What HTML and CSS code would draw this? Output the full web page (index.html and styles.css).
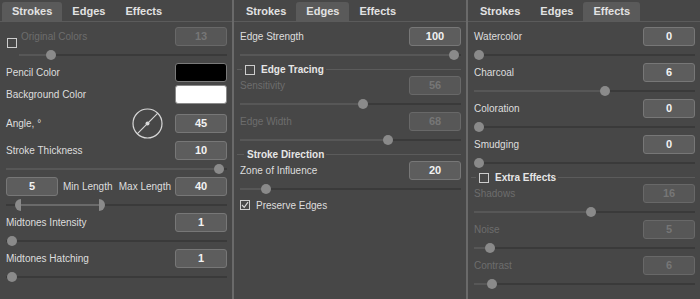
FILE: index.html
```html
<!DOCTYPE html>
<html lang="en">

<head>
  <meta charset="UTF-8">
  <meta name="viewport" content="width=device-width, initial-scale=1.0">
  <title>Sketch settings</title>
  <link rel="stylesheet" href="styles.css">
</head>

<body>
  <div class="dock">

    <!-- Strokes -->
    <section class="panel">
      <div class="tabs">
        <span class="tab active">Strokes</span>
        <span class="tab">Edges</span>
        <span class="tab">Effects</span>
      </div>
      <div class="body">
        <div class="row">
          <span class="check low"></span>
          <span class="label off">Original Colors</span>
          <span class="value off">13</span>
        </div>
        <div class="slider indent">
          <div class="track"><span class="fill" style="width:15.4%"></span><span class="thumb" style="left:15.4%"></span></div>
        </div>
        <div class="row">
          <span class="label">Pencil Color</span>
          <span class="value swatch black"></span>
        </div>
        <div class="row gap3">
          <span class="label">Background Color</span>
          <span class="value swatch white"></span>
        </div>
        <div class="row angle">
          <span class="label">Angle, °</span>
          <svg class="dial" width="31" height="31" viewBox="0 0 31 31">
            <circle cx="15.5" cy="15.5" r="14.5" fill="none" stroke="#d8d8d8" stroke-width="1.2" />
            <line x1="5.2" y1="25.8" x2="25.8" y2="5.2" stroke="#d8d8d8" stroke-width="1.1" />
            <circle cx="15.5" cy="15.5" r="2" fill="#d8d8d8" />
          </svg>
          <span class="value">45</span>
        </div>
        <div class="row gap1">
          <span class="label">Stroke Thickness</span>
          <span class="value">10</span>
        </div>
        <div class="slider">
          <div class="track"><span class="fill" style="width:96.4%"></span><span class="thumb" style="left:96.4%"></span></div>
        </div>
        <div class="row">
          <span class="value">5</span>
          <span class="min">Min Length</span>
          <span class="label"></span>
          <span class="max">Max Length</span>
          <span class="value">40</span>
        </div>
        <div class="slider">
          <div class="track">
            <span class="range" style="left:6.8%;width:35.2%"></span>
            <span class="half left" style="left:6.8%"></span>
            <span class="half right" style="left:42%"></span>
          </div>
        </div>
        <div class="row">
          <span class="label">Midtones Intensity</span>
          <span class="value">1</span>
        </div>
        <div class="slider">
          <div class="track"><span class="thumb" style="left:2.7%"></span></div>
        </div>
        <div class="row">
          <span class="label">Midtones Hatching</span>
          <span class="value">1</span>
        </div>
        <div class="slider">
          <div class="track"><span class="thumb" style="left:2.7%"></span></div>
        </div>
      </div>
    </section>

    <!-- Edges -->
    <section class="panel">
      <div class="tabs">
        <span class="tab">Strokes</span>
        <span class="tab active">Edges</span>
        <span class="tab">Effects</span>
      </div>
      <div class="body">
        <div class="row">
          <span class="label">Edge Strength</span>
          <span class="value">100</span>
        </div>
        <div class="slider">
          <div class="track"><span class="fill" style="width:96.8%"></span><span class="thumb" style="left:96.8%"></span></div>
        </div>
        <div class="group">
          <span class="title"><span class="check"></span>Edge Tracing</span>
        </div>
        <div class="row">
          <span class="label off">Sensitivity</span>
          <span class="value off">56</span>
        </div>
        <div class="slider">
          <div class="track"><span class="fill" style="width:55.7%"></span><span class="thumb" style="left:55.7%"></span></div>
        </div>
        <div class="row">
          <span class="label off">Edge Width</span>
          <span class="value off">68</span>
        </div>
        <div class="slider">
          <div class="track"><span class="fill" style="width:67%"></span><span class="thumb" style="left:67%"></span></div>
        </div>
        <div class="group">
          <span class="title plain">Stroke Direction</span>
        </div>
        <div class="row">
          <span class="label">Zone of Influence</span>
          <span class="value">20</span>
        </div>
        <div class="slider">
          <div class="track"><span class="fill" style="width:11.8%"></span><span class="thumb" style="left:11.8%"></span></div>
        </div>
        <div class="row option">
          <span class="check on">
            <svg width="8" height="8" viewBox="0 0 8 8"><polyline points="1,4 3.2,6.3 7,1.2" fill="none" stroke="#d8d8d8" stroke-width="1.1" /></svg>
          </span>
          <span class="label">Preserve Edges</span>
        </div>
      </div>
    </section>

    <!-- Effects -->
    <section class="panel">
      <div class="tabs">
        <span class="tab">Strokes</span>
        <span class="tab">Edges</span>
        <span class="tab active">Effects</span>
      </div>
      <div class="body">
        <div class="row">
          <span class="label">Watercolor</span>
          <span class="value">0</span>
        </div>
        <div class="slider">
          <div class="track"><span class="thumb" style="left:2.3%"></span></div>
        </div>
        <div class="row">
          <span class="label">Charcoal</span>
          <span class="value">6</span>
        </div>
        <div class="slider">
          <div class="track"><span class="fill" style="width:59.3%"></span><span class="thumb" style="left:59.3%"></span></div>
        </div>
        <div class="row">
          <span class="label">Coloration</span>
          <span class="value">0</span>
        </div>
        <div class="slider">
          <div class="track"><span class="thumb" style="left:2.3%"></span></div>
        </div>
        <div class="row">
          <span class="label">Smudging</span>
          <span class="value">0</span>
        </div>
        <div class="slider">
          <div class="track"><span class="thumb" style="left:2.3%"></span></div>
        </div>
        <div class="group">
          <span class="title"><span class="check"></span>Extra Effects</span>
        </div>
        <div class="row">
          <span class="label off">Shadows</span>
          <span class="value off">16</span>
        </div>
        <div class="slider">
          <div class="track"><span class="fill" style="width:53%"></span><span class="thumb" style="left:53%"></span></div>
        </div>
        <div class="row">
          <span class="label off">Noise</span>
          <span class="value off">5</span>
        </div>
        <div class="slider">
          <div class="track"><span class="fill" style="width:7.2%"></span><span class="thumb" style="left:7.2%"></span></div>
        </div>
        <div class="row">
          <span class="label off">Contrast</span>
          <span class="value off">6</span>
        </div>
        <div class="slider">
          <div class="track"><span class="fill" style="width:8.1%"></span><span class="thumb" style="left:8.1%"></span></div>
        </div>
      </div>
    </section>

  </div>
</body>

</html>
```

FILE: styles.css
```css
body {
  margin: 0;
  background: #474747;
  font-family: "Liberation Sans", Arial, sans-serif;
  font-size: 10px;
  color: #dedede;
}

.dock {
  display: flex;
  gap: 2px;
  height: 299px;
  background: #6a6a6a;
}

.panel {
  flex: 1;
  background: #474747;
}

.tabs {
  display: flex;
  align-items: flex-end;
  height: 21px;
  padding-left: 2px;
  border-bottom: 1px solid #5b5b5b;
}

.tab {
  height: 19px;
  padding: 0 10px;
  line-height: 19px;
  font-size: 11px;
  font-weight: bold;
  color: #e2e2e2;
  border-radius: 3px 3px 0 0;
}

.tab.active {
  background: #5a5a5a;
}

.body {
  display: flex;
  flex-direction: column;
  padding: 5px 5px 0 6px;
}

.row {
  display: flex;
  align-items: center;
  height: 19px;
}

.row.gap3 {
  margin-top: 3px;
}

.row.gap1 {
  margin-top: 1px;
}

.row.angle {
  height: 34px;
  margin-top: 2px;
}

.label {
  flex: 1;
}

.off {
  color: #6d6d6d;
}

.value {
  width: 52px;
  height: 19px;
  box-sizing: border-box;
  border: 1px solid #777;
  border-radius: 3px;
  background: #5d5d5d;
  text-align: center;
  line-height: 17px;
  font-size: 11px;
  font-weight: bold;
  color: #f2f2f2;
}

.value.off {
  border-color: #686868;
  background: #575757;
  color: #767676;
}

.swatch.black {
  background: #000;
  border-color: #7a7a7a;
}

.swatch.white {
  background: #fff;
  border-color: #8a8a8a;
}

.dial {
  margin-right: 12px;
}

.min {
  margin-left: 5px;
}

.max {
  margin-right: 4px;
}

.check {
  display: flex;
  align-items: center;
  justify-content: center;
  width: 10px;
  height: 10px;
  box-sizing: border-box;
  border: 1px solid #cdcdcd;
}

.check.low {
  align-self: flex-end;
  margin: 0 4px -2px 1px;
}

.option {
  height: 14px;
  margin-top: 1px;
}

.option .check {
  margin-right: 6px;
}

.slider {
  display: flex;
  align-items: center;
  height: 17px;
}

.slider.indent {
  padding-left: 13px;
}

.track {
  position: relative;
  flex: 1;
  height: 2px;
  background: #3a3a3a;
}

.fill {
  display: block;
  height: 100%;
  background: #575757;
}

.thumb {
  position: absolute;
  top: 50%;
  width: 10px;
  height: 10px;
  border-radius: 50%;
  background: #8a8a8a;
  transform: translate(-50%, -50%);
}

.range {
  position: absolute;
  top: 0;
  height: 100%;
  background: #6a6a6a;
}

.half {
  position: absolute;
  top: 50%;
  width: 6px;
  height: 12px;
  background: #8a8a8a;
}

.half.left {
  border-radius: 6px 0 0 6px;
  transform: translate(-100%, -50%);
}

.half.right {
  border-radius: 0 6px 6px 0;
  transform: translate(0, -50%);
}

.group {
  display: flex;
  align-items: center;
  height: 13px;
  margin-left: -3px;
  background: linear-gradient(#5b5b5b, #5b5b5b) center / 100% 1px no-repeat;
}

.title {
  display: flex;
  align-items: center;
  gap: 6px;
  margin-left: 5px;
  padding: 0 2px 0 3px;
  background: #474747;
  font-weight: bold;
  color: #e6e6e6;
}

.title.plain {
  margin-left: 7px;
}
```
